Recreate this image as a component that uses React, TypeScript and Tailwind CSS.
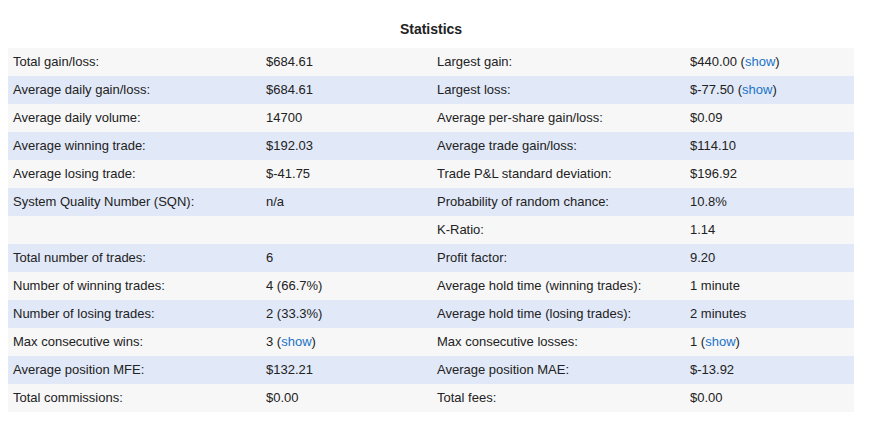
import React from 'react';

type Cell = { text: string; show?: boolean };
type Row = [string, Cell, string, Cell];

const rows: Row[] = [
  ['Total gain/loss:', { text: '$684.61' }, 'Largest gain:', { text: '$440.00', show: true }],
  ['Average daily gain/loss:', { text: '$684.61' }, 'Largest loss:', { text: '$-77.50', show: true }],
  ['Average daily volume:', { text: '14700' }, 'Average per-share gain/loss:', { text: '$0.09' }],
  ['Average winning trade:', { text: '$192.03' }, 'Average trade gain/loss:', { text: '$114.10' }],
  ['Average losing trade:', { text: '$-41.75' }, 'Trade P&L standard deviation:', { text: '$196.92' }],
  ['System Quality Number (SQN):', { text: 'n/a' }, 'Probability of random chance:', { text: '10.8%' }],
  ['', { text: '' }, 'K-Ratio:', { text: '1.14' }],
  ['Total number of trades:', { text: '6' }, 'Profit factor:', { text: '9.20' }],
  ['Number of winning trades:', { text: '4 (66.7%)' }, 'Average hold time (winning trades):', { text: '1 minute' }],
  ['Number of losing trades:', { text: '2 (33.3%)' }, 'Average hold time (losing trades):', { text: '2 minutes' }],
  ['Max consecutive wins:', { text: '3', show: true }, 'Max consecutive losses:', { text: '1', show: true }],
  ['Average position MFE:', { text: '$132.21' }, 'Average position MAE:', { text: '$-13.92' }],
  ['Total commissions:', { text: '$0.00' }, 'Total fees:', { text: '$0.00' }],
];

function Value({ cell }: { cell: Cell }) {
  return (
    <>
      {cell.text}
      {cell.show && (
        <>
          {' ('}
          <a href="#" className="text-[#1a73c9]">show</a>
          {')'}
        </>
      )}
    </>
  );
}

export default function App() {
  return (
    <div className="bg-white min-h-[422px] font-['Liberation_Sans',Arial,sans-serif] text-[13px] text-[#222]">
      <div className="w-[846px] ml-2 pt-[21px]">
        <h2 className="text-center text-[14px] font-bold text-[#222] h-[27px] leading-[17px]">Statistics</h2>
        <table className="w-full border-collapse table-fixed">
          <colgroup>
            <col className="w-[253px]" />
            <col className="w-[171px]" />
            <col className="w-[253px]" />
            <col className="w-[169px]" />
          </colgroup>
          <tbody>
            {rows.map((r, i) => (
              <tr key={i} className={i % 2 === 0 ? 'bg-[#f7f7f7] h-[28px]' : 'bg-[#e1e8f7] h-[28px]'}>
                <td className="px-[5px] py-0">{r[0]}</td>
                <td className="px-[5px] py-0"><Value cell={r[1]} /></td>
                <td className="px-[5px] py-0">{r[2]}</td>
                <td className="px-[5px] py-0"><Value cell={r[3]} /></td>
              </tr>
            ))}
          </tbody>
        </table>
      </div>
    </div>
  );
}
